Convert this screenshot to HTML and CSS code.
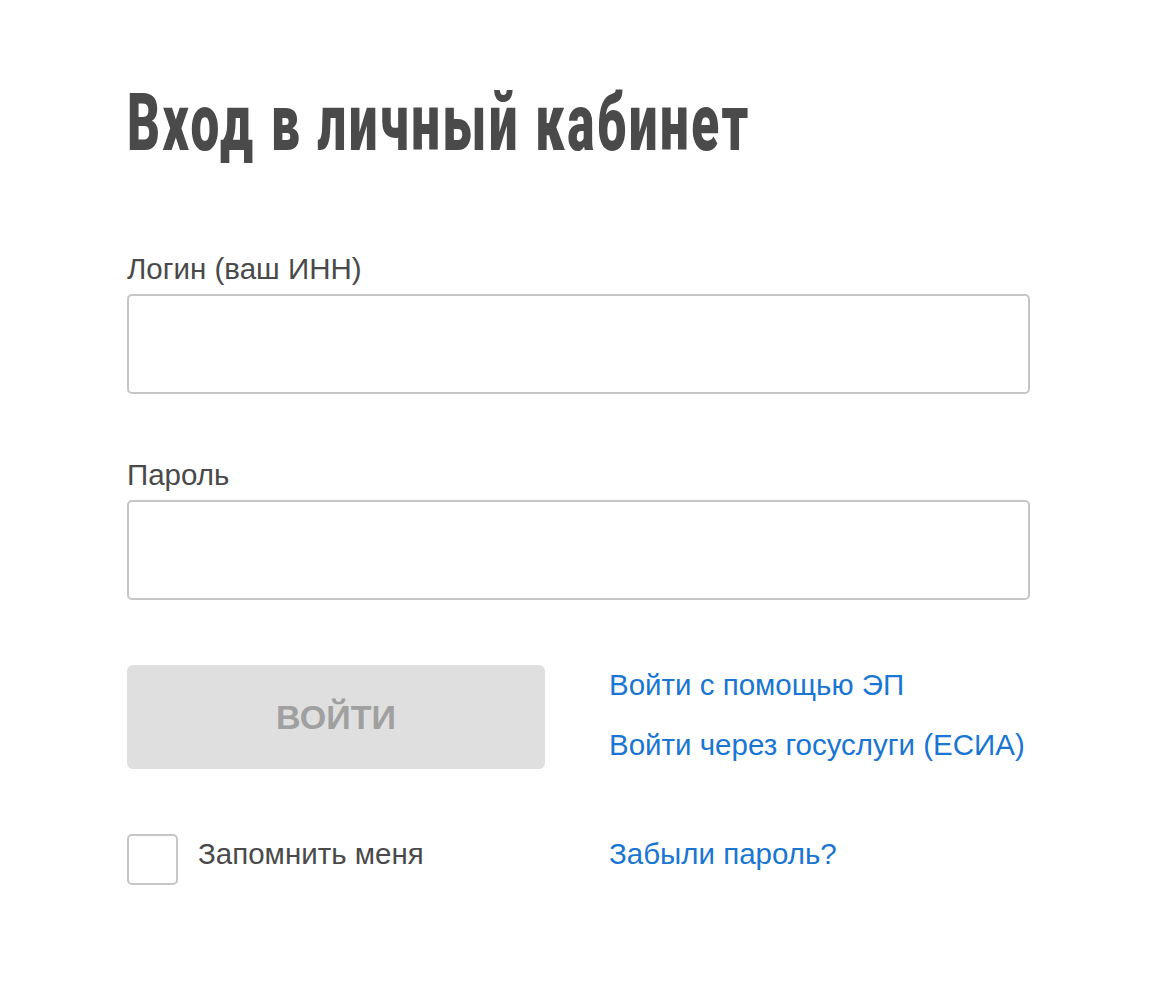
FILE: index.html
```html
<!DOCTYPE html>
<html lang="ru">
<head>
<meta charset="utf-8">
<title>Вход в личный кабинет</title>
<link rel="stylesheet" href="styles.css">
</head>
<body>
<main class="login">
  <h1 class="title"><span class="title-text">Вход в личный кабинет</span></h1>
  <form class="form">
    <label class="field">
      <span class="field-label">Логин (ваш ИНН)</span>
      <input class="input" type="text">
    </label>
    <label class="field field-second">
      <span class="field-label">Пароль</span>
      <input class="input" type="password">
    </label>
    <div class="actions">
      <button class="btn" type="button" disabled>ВОЙТИ</button>
      <div class="alt-links">
        <a class="link" href="#">Войти с помощью ЭП</a>
        <a class="link" href="#">Войти через госуслуги (ЕСИА)</a>
      </div>
    </div>
    <div class="bottom">
      <label class="remember">
        <span class="checkbox"></span>
        <span class="remember-text">Запомнить меня</span>
      </label>
      <a class="link link-forgot" href="#">Забыли пароль?</a>
    </div>
  </form>
</main>
</body>
</html>
```
FILE: styles.css
```css
html, body {
  margin: 0;
  padding: 0;
  background: #ffffff;
}
body {
  font-family: "Liberation Sans", Arial, sans-serif;
  color: #4a4a4a;
}
.login {
  width: 903px;
  padding: 0 0 0 127px;
}
.title {
  margin: 0;
  padding-top: 83px;
  height: 89px;
  font-family: Roboto, "DejaVu Sans", sans-serif;
  font-weight: 900;
  font-size: 80px;
  line-height: 80px;
  letter-spacing: 4px;
  color: #4a4a4a;
  white-space: nowrap;
}
.title-text {
  display: inline-block;
  transform: scaleX(0.64);
  transform-origin: 0 50%;
}
.form {
  margin-top: 80px;
}
.field {
  display: flex;
  flex-direction: column;
}
.field-second {
  margin-top: 64px;
}
.field-label {
  font-size: 29.5px;
  line-height: 34px;
  margin-bottom: 8px;
  color: #4a4a4a;
}
.input {
  box-sizing: border-box;
  width: 903px;
  height: 100px;
  border: 2px solid #c6c6c6;
  border-radius: 5px;
  background: #fff;
  margin: 0;
  padding: 0 20px;
  font: inherit;
  outline: none;
}
.actions {
  display: flex;
  margin-top: 65px;
  gap: 64px;
}
.btn {
  width: 418px;
  height: 104px;
  border: none;
  border-radius: 6px;
  background: #dfdfdf;
  color: #a0a0a0;
  font-family: "Liberation Sans", Arial, sans-serif;
  font-weight: bold;
  font-size: 34px;
  padding: 0;
  flex: none;
}
.alt-links {
  display: flex;
  flex-direction: column;
  gap: 26px;
  padding-top: 3px;
}
.link {
  color: #1a76d2;
  text-decoration: none;
  font-size: 29.5px;
  line-height: 34px;
}
.bottom {
  display: flex;
  align-items: flex-start;
  margin-top: 65px;
}
.remember {
  display: flex;
  align-items: flex-start;
  width: 482px;
}
.checkbox {
  box-sizing: border-box;
  width: 51px;
  height: 51px;
  border: 2px solid #c6c6c6;
  border-radius: 5px;
  flex: none;
}
.remember-text {
  margin: 3px 0 0 20px;
  font-size: 29.5px;
  line-height: 34px;
  color: #4a4a4a;
}
.link-forgot {
  margin-top: 3px;
}
```
